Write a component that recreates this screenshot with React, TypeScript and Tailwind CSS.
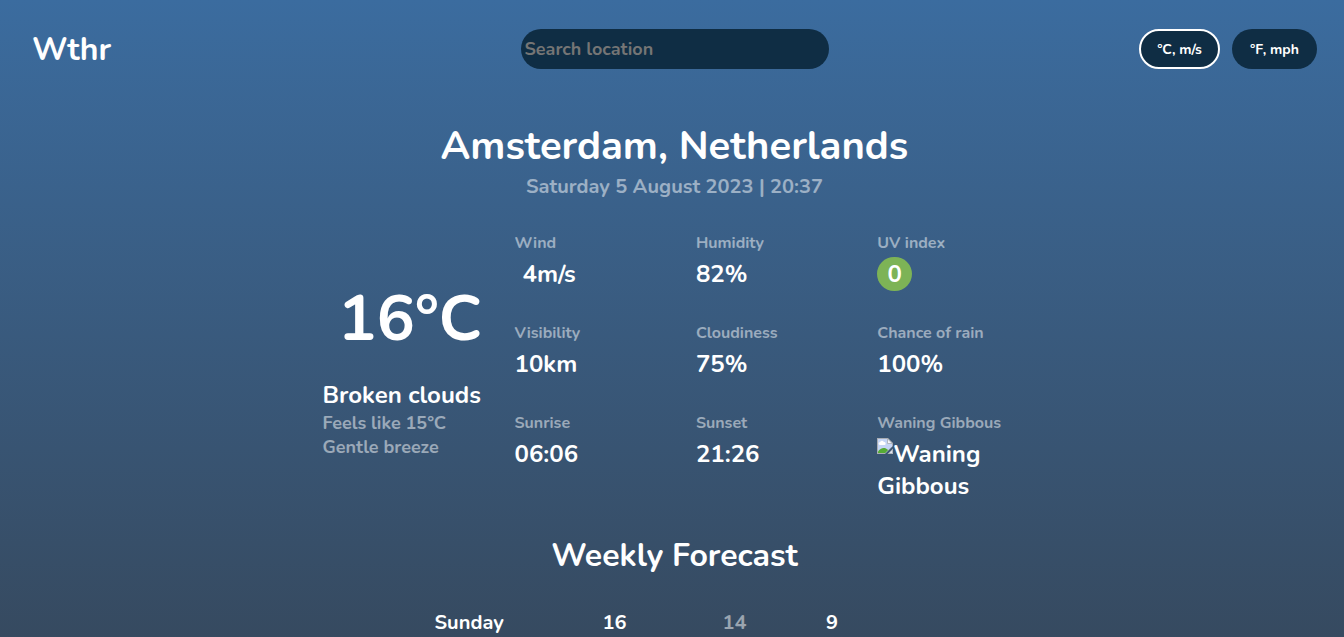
import React from "react";

const stats = [
  { label: "Wind", value: "4m/s", indent: true },
  { label: "Humidity", value: "82%" },
  { label: "UV index", value: "0", badge: true },
  { label: "Visibility", value: "10km" },
  { label: "Cloudiness", value: "75%" },
  { label: "Chance of rain", value: "100%" },
  { label: "Sunrise", value: "06:06" },
  { label: "Sunset", value: "21:26" },
];

function BrokenImage() {
  return (
    <svg width="16" height="16" viewBox="0 0 16 16" className="shrink-0">
      <path d="M0 0H11L16 5V8L8 16H0Z" fill="#a9adb3" />
      <path d="M1 1H10.5L15 5.5V8.3L8.3 15H1Z" fill="#c5d5f5" />
      <path d="M3 7a1.4 1.4 0 0 1 0-2.8A2 2 0 0 1 6.8 4a1.5 1.5 0 0 1 .7 3Z" fill="#fff" />
      <path d="M1 15V13.5C3.5 10 7.5 8.5 11.2 12.1L8.3 15Z" fill="#55ab35" />
      <path d="M10.5 0.8V5.5H15.2Z" fill="#f4f6fa" stroke="#a9adb3" strokeWidth="0.8" />
      <path d="M10.5 16L16 10.5V16Z" fill="#b3b7bd" />
      <path d="M12.5 15L15 12.5V15Z" fill="#dfe8f8" />
    </svg>
  );
}

export default function App() {
  return (
    <div className="flex h-[637px] w-full flex-col overflow-hidden bg-linear-to-b from-[#3b6c9f] to-[#364a60] font-['Nunito','Lato',sans-serif] font-bold whitespace-nowrap text-white">
      <header className="flex h-[98px] shrink-0 items-center justify-between pr-[27px] pl-8">
        <h1 className="w-[488px] pt-0.5 text-[32px] leading-10">Wthr</h1>
        <input
          placeholder="Search location"
          className="h-10 w-[308px] rounded-full bg-[#0f2d44] pl-1 text-[18px] font-bold outline-none placeholder:text-[#757575]"
        />
        <div className="flex w-[488px] justify-end gap-3 text-[14px]">
          <button className="h-10 w-[81px] rounded-full border-2 border-white bg-[#0f2d44]">°C, m/s</button>
          <button className="h-10 w-[85px] rounded-full bg-[#0f2d44]">°F, mph</button>
        </div>
      </header>
      <main className="flex flex-col">
        <div className="flex flex-col items-center pt-[22px] pl-[5px]">
          <h2 className="text-[40px] leading-[52px]">Amsterdam, Netherlands</h2>
          <p className="pt-px text-[20px] leading-7 text-white/50">Saturday 5 August 2023 | 20:37</p>
        </div>
        <section className="flex h-[300px] pt-[30px] pl-[322.5px]">
          <div className="flex w-[192px] flex-col pt-[43px]">
            <p className="pl-[15.5px] text-[64px] leading-[90px]">16°C</p>
            <p className="mt-[15px] text-[24px] leading-8">Broken clouds</p>
            <p className="text-[18px] leading-6 text-white/50">Feels like 15°C</p>
            <p className="text-[18px] leading-6 text-white/50">Gentle breeze</p>
          </div>
          <dl className="grid auto-rows-[90px] grid-cols-[repeat(3,181.4px)]">
            {stats.map((s) => (
              <div key={s.label}>
                <dt className="text-[16px] leading-6 text-white/50">{s.label}</dt>
                <dd className={s.indent ? "mt-[3px] pl-2 text-[24px] leading-8" : "mt-[3px] text-[24px] leading-8"}>
                  {s.badge ? (
                    <span className="-mt-px flex h-[34px] w-[35px] items-center justify-center rounded-full bg-[#7db356]">{s.value}</span>
                  ) : (
                    s.value
                  )}
                </dd>
              </div>
            ))}
            <div>
              <dt className="text-[16px] leading-6 text-white/50">Waning Gibbous</dt>
              <dd className="mt-[3px] text-[24px] leading-8">
                <div className="flex"><BrokenImage />Waning</div>
                Gibbous
              </dd>
            </div>
          </dl>
        </section>
        <h3 className="mt-[33px] pl-[5px] text-center text-[32px] leading-[44px]">Weekly Forecast</h3>
        <div className="mt-[31px] flex pl-[434.5px] text-[20px] leading-7">
          <span className="w-[168px]">Sunday</span>
          <span className="w-[120px]">16</span>
          <span className="w-[103.5px] text-white/50">14</span>
          <span>9</span>
        </div>
      </main>
    </div>
  );
}
